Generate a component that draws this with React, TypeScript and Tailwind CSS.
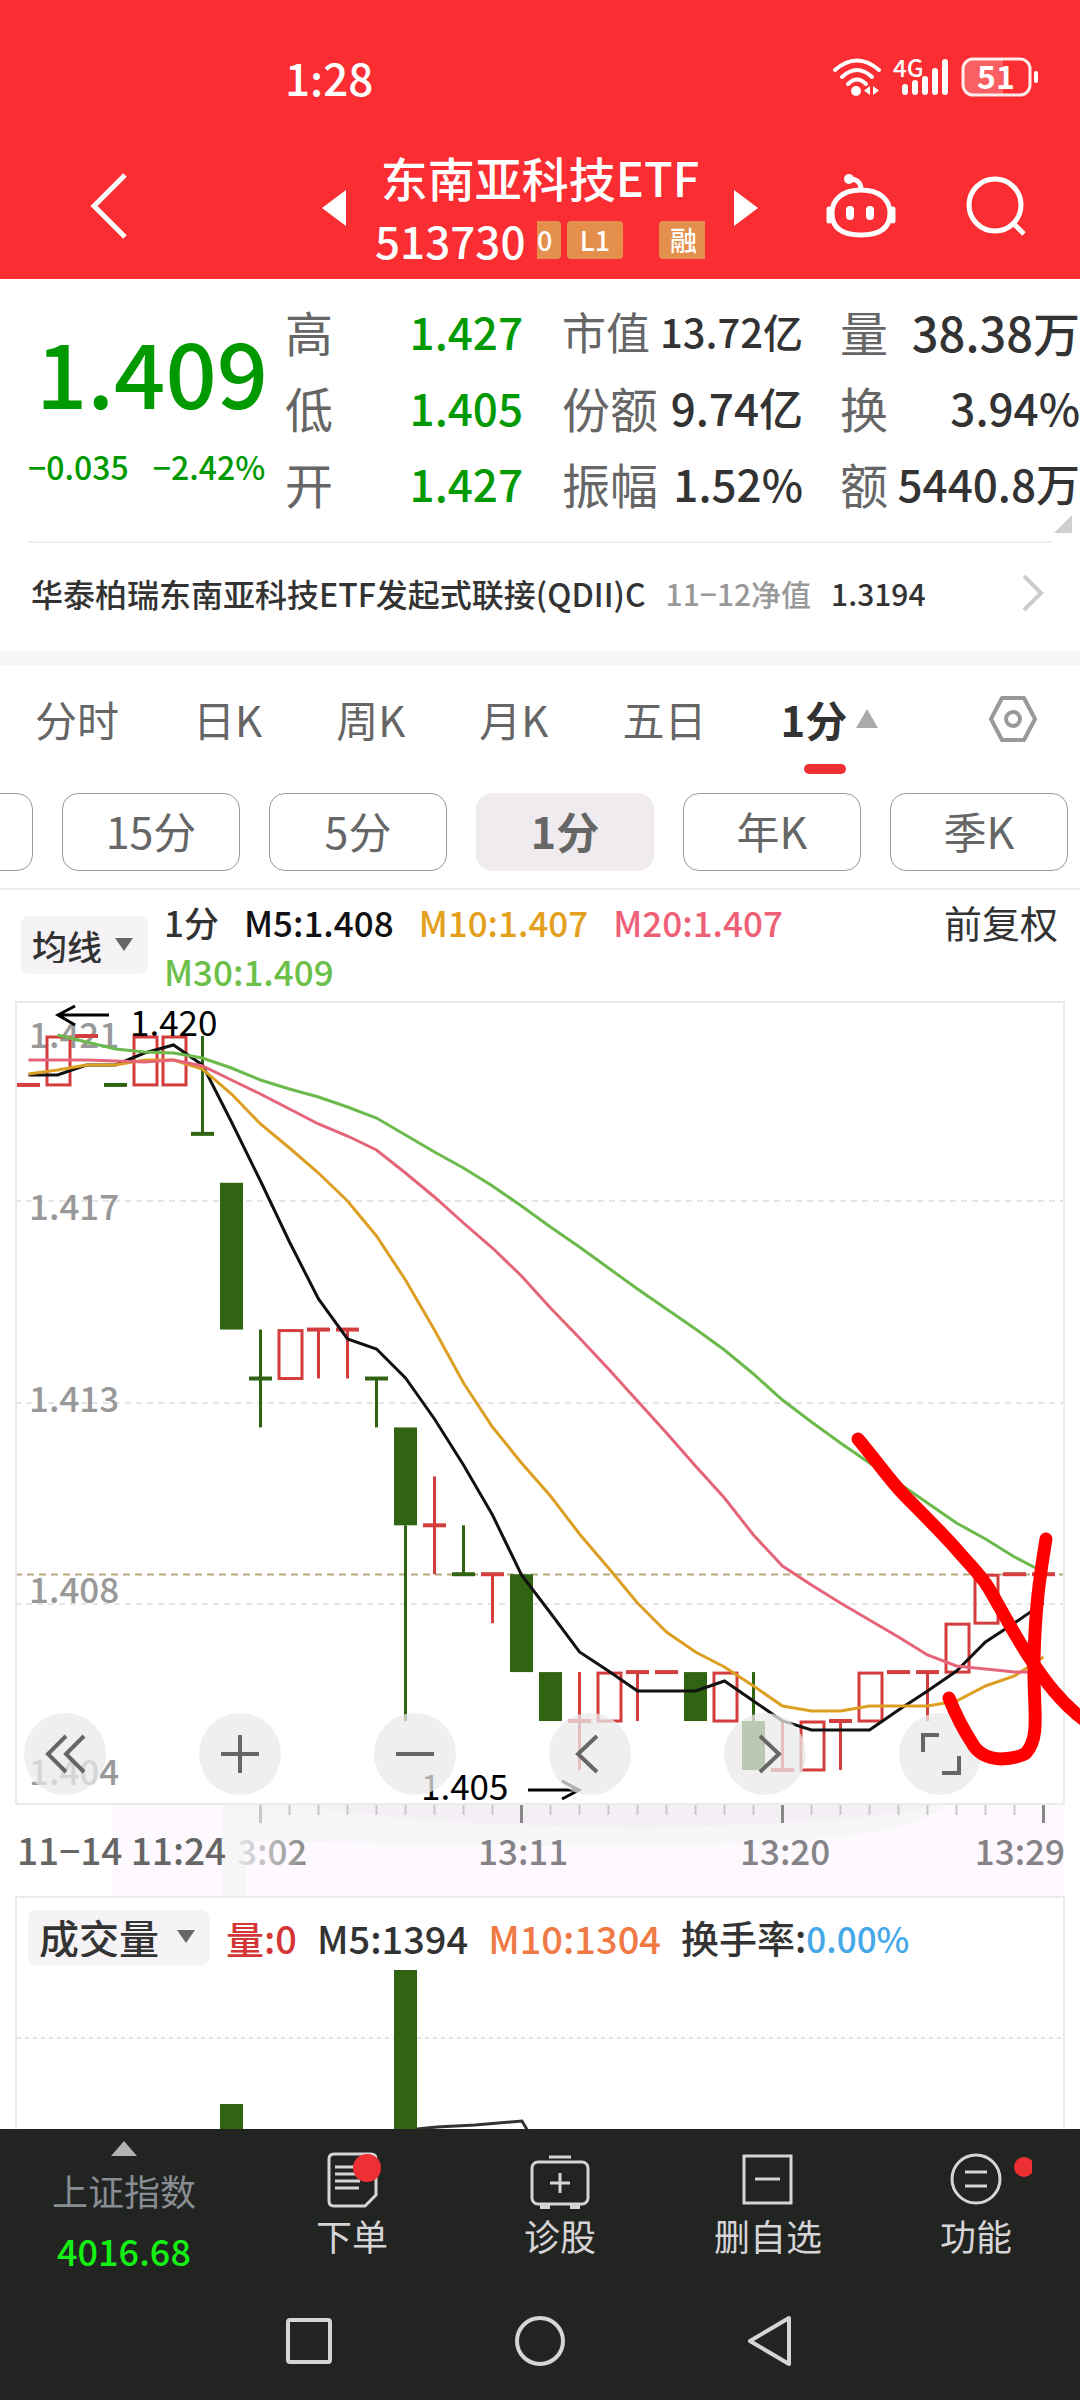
import type { ReactNode } from "react";

type Candle = {
  up: boolean;
  // levels count 0.001 steps down from 1.420
  top: number;
  bottom: number;
  high?: number;
  low?: number;
};

const STEP = 29;
const LEVEL = 48.93;

const xAt = (i: number) => 13.5 + STEP * i;
const yAt = (level: number) => 35 + LEVEL * level;

const candles: Candle[] = [
  { up: true, top: 1, bottom: 1 },
  { up: true, top: 0, bottom: 1 },
  { up: true, top: 0, bottom: 0 },
  { up: false, top: 1, bottom: 1 },
  { up: true, top: 0, bottom: 1 },
  { up: true, top: 0, bottom: 1 },
  { up: false, top: 2, bottom: 2, high: 0 },
  { up: false, top: 3, bottom: 6 },
  { up: false, top: 7, bottom: 7, high: 6, low: 8 },
  { up: true, top: 6, bottom: 7 },
  { up: true, top: 6, bottom: 6, low: 7 },
  { up: true, top: 6, bottom: 6, low: 7 },
  { up: false, top: 7, bottom: 7, low: 8 },
  { up: false, top: 8, bottom: 10, low: 14 },
  { up: true, top: 10, bottom: 10, high: 9, low: 11 },
  { up: false, top: 11, bottom: 11, high: 10 },
  { up: true, top: 11, bottom: 11, low: 12 },
  { up: false, top: 11, bottom: 13 },
  { up: false, top: 13, bottom: 14 },
  { up: true, top: 14, bottom: 14, high: 13, low: 15 },
  { up: true, top: 13, bottom: 14 },
  { up: true, top: 13, bottom: 13, low: 14 },
  { up: true, top: 13, bottom: 13 },
  { up: false, top: 13, bottom: 14 },
  { up: true, top: 13, bottom: 14 },
  { up: false, top: 14, bottom: 15, high: 13 },
  { up: true, top: 15, bottom: 15, high: 14 },
  { up: true, top: 14, bottom: 15 },
  { up: true, top: 14, bottom: 14, low: 15 },
  { up: true, top: 13, bottom: 14 },
  { up: true, top: 13, bottom: 13 },
  { up: true, top: 13, bottom: 13, low: 14 },
  { up: true, top: 12, bottom: 13 },
  { up: true, top: 11, bottom: 12 },
  { up: true, top: 11, bottom: 11 },
  { up: true, top: 11, bottom: 11 },
];

const averages = [
  {
    name: "M5",
    color: "#111111",
    start: 0,
    ys: [74, 74, 64, 64, 52, 44, 64, 121, 180, 241, 298, 338, 348, 377, 418, 464, 514, 574, 612, 651, 670, 690, 690, 690, 680, 700, 720, 729, 729, 729, 709, 690, 670, 641, 622, 602],
  },
  {
    name: "M10",
    color: "#dd9f23",
    start: 0,
    ys: [73, 69, 64, 64, 59, 59, 68, 93, 123, 147, 172, 200, 235, 279, 329, 382, 426, 462, 495, 533, 567, 602, 631, 651, 666, 685, 705, 710, 710, 705, 705, 705, 700, 685, 675, 656],
  },
  {
    name: "M30",
    color: "#6cb94c",
    start: 1,
    ys: [34, 41, 48, 51, 52, 57, 67, 79, 88, 96, 106, 117, 134, 151, 167, 185, 205, 226, 246, 267, 288, 308, 328, 349, 373, 399, 421, 442, 462, 482, 502, 522, 538, 556, 571],
  },
  {
    name: "M20",
    color: "#e5647a",
    start: 0,
    ys: [59, 59, 59, 60, 61, 59, 65, 79, 93, 108, 123, 135, 149, 172, 196, 222, 247, 275, 307, 337, 368, 400, 432, 465, 497, 534, 565, 584, 602, 619, 636, 654, 665, 668, 671, 671],
  },
];

const priceLabels = [
  { text: "1.421", y: 47 },
  { text: "1.417", y: 219 },
  { text: "1.413", y: 411 },
  { text: "1.408", y: 602 },
  { text: "1.404", y: 784 },
];

function StatusBar() {
  return (
    <div className="flex h-[145px] items-center justify-between pt-2 pr-[41px] pl-[285px]">
      <span className="text-[44px] leading-[64px] font-medium">1:28</span>
      <div className="flex items-center gap-3">
        <svg width="48" height="40" viewBox="0 0 48 40" fill="none" stroke="currentColor" strokeWidth="4" strokeLinecap="round">
          <path d="M2 13Q24 -6 46 13" />
          <path d="M9 20Q24 6 39 20" />
          <path d="M15 27Q24 18 33 27" />
          <circle cx="23" cy="34" r="5" fill="currentColor" stroke="none" />
          <path d="M37 29v9l-6 -4.500zM40 29v9l6 -4.500z" fill="currentColor" stroke="none" />
        </svg>
        <svg width="56" height="40" viewBox="0 0 56 40" fill="currentColor" className="overflow-visible">
          <text x="0" y="20" className="text-[24px] font-medium">4G</text>
          <rect x="9" y="27" width="6" height="11" rx="3" />
          <rect x="19" y="23" width="6" height="15" rx="3" />
          <rect x="29" y="19" width="6" height="19" rx="3" />
          <rect x="39" y="11" width="6" height="27" rx="3" />
          <rect x="49" y="2" width="6" height="36" rx="3" />
        </svg>
        <svg width="78" height="40" viewBox="0 0 78 40" className="overflow-visible">
          <path d="M12 2H42V38H12A10 10 0 0 1 2 28V12A10 10 0 0 1 12 2Z" fill="#ffffff" fillOpacity=".24" />
          <rect x="2" y="2" width="67" height="36" rx="10" fill="none" stroke="#fff" strokeOpacity=".9" strokeWidth="3" />
          <rect x="73" y="14" width="4" height="12" rx="2" fill="#fff" />
          <text x="35" y="32" textAnchor="middle" fill="#fff" className="text-[32px] font-bold">51</text>
        </svg>
      </div>
    </div>
  );
}

function Header() {
  return (
    <header className="bg-[#f92d32] text-white">
      <StatusBar />
      <div className="grid h-[134px] grid-cols-[1fr_auto_1fr] items-center pb-2">
        <button aria-label="返回" className="ml-[89px] w-10 pb-1">
          <svg width="40" height="68" viewBox="0 0 40 68" fill="none" stroke="currentColor" strokeWidth="5">
            <path d="M36 3L5 34L36 65" />
          </svg>
        </button>
        <div className="flex items-center">
          <button aria-label="上一只">
            <svg width="24" height="38" viewBox="0 0 24 38" fill="currentColor">
              <path d="M24 1V37L0 19Z" />
            </svg>
          </button>
          <div className="flex w-[388px] flex-col items-center">
            <h1 className="h-16 text-[47px] leading-[64px] font-medium whitespace-nowrap">
              东南亚科技ETF
            </h1>
            <div className="flex h-[62px] w-[330px] items-center overflow-hidden text-[44px] font-medium">
              <span className="leading-[62px]">513730</span>
              <div className="ml-auto flex w-[168px] overflow-hidden text-[27px] leading-[38px]">
                <span className="w-6 rounded-r bg-[#e58f4c]">0</span>
                <span className="ml-[6px] w-14 rounded bg-[#e58f4c] text-center">L1</span>
                <span className="ml-9 w-[46px] rounded-l bg-[#e58f4c] pl-[11px]">融</span>
              </div>
            </div>
          </div>
          <button aria-label="下一只">
            <svg width="24" height="38" viewBox="0 0 24 38" fill="currentColor">
              <path d="M0 1V37L24 19Z" />
            </svg>
          </button>
        </div>
        <div className="flex items-center justify-end gap-[69px] pr-[53px] pb-1">
          <button aria-label="智能助手">
            <svg width="70" height="66" viewBox="0 0 70 66" fill="none" stroke="currentColor" strokeWidth="5">
              <path d="M23 6C31 6 35 9 35 17" />
              <circle cx="23" cy="6" r="5" fill="currentColor" stroke="none" />
              <path d="M35 17C54 17 64 27 64 40C64 55 54 62 35 62C16 62 6 55 6 40C6 27 16 17 35 17Z" />
              <path d="M3 36v12M67 36v12" strokeWidth="5" strokeLinecap="round" />
              <rect x="20" y="33" width="8" height="14" rx="4" fill="currentColor" stroke="none" />
              <rect x="40" y="33" width="8" height="14" rx="4" fill="currentColor" stroke="none" />
            </svg>
          </button>
          <button aria-label="搜索">
            <svg width="62" height="62" viewBox="0 0 62 62" fill="none" stroke="currentColor" strokeWidth="5">
              <circle cx="30" cy="30" r="26" />
              <path d="M48 48L59 59" />
            </svg>
          </button>
        </div>
      </div>
    </header>
  );
}

function Row({ label, children }: { label: string; children: ReactNode }) {
  return (
    <div className="flex h-[76px] items-center justify-between whitespace-nowrap">
      <dt className="text-[48px] leading-none text-[#666]">{label}</dt>
      <dd className="text-[44px] leading-none font-medium">{children}</dd>
    </div>
  );
}

function Quote() {
  return (
    <section className="relative grid grid-cols-[285fr_277fr_278fr_240fr] pt-[14px] pb-5">
      <div className="pt-[29px] pl-9 text-[#009900]">
        <div className="text-[90px] leading-[96px] font-medium">1.409</div>
        <div className="mt-6 -ml-2 flex gap-6 text-[32px] leading-[48px] font-medium whitespace-nowrap">
          <span>−0.035</span>
          <span>−2.42%</span>
        </div>
      </div>
      <dl className="pr-[39px] text-[#009900]">
        <Row label="高">1.427</Row>
        <Row label="低">1.405</Row>
        <Row label="开">1.427</Row>
      </dl>
      <dl className="pr-[37px] text-[#333]">
        <div className="flex h-[76px] items-center justify-between whitespace-nowrap">
          <dt className="text-[44px] leading-none text-[#666]">市值</dt>
          <dd className="text-[40px] leading-none font-medium">13.72亿</dd>
        </div>
        <Row label="份额">9.74亿</Row>
        <Row label="振幅">1.52%</Row>
      </dl>
      <dl className="text-[#333]">
        <div className="flex h-[76px] items-center justify-between whitespace-nowrap">
          <dt className="text-[48px] leading-none text-[#666]">量</dt>
          <dd className="text-[47px] leading-none font-medium">38.38万</dd>
        </div>
        <Row label="换">3.94%</Row>
        <Row label="额">5440.8万</Row>
      </dl>
      <svg className="absolute right-2 bottom-2" width="18" height="18" viewBox="0 0 18 18" fill="#cfcfcf">
        <path d="M18 0V18H0Z" />
      </svg>
    </section>
  );
}

function FundLink() {
  return (
    <a href="#fund" className="mx-7 flex h-[110px] items-center border-t-2 border-[#efefef] pr-2 pb-2 pl-[3px] text-[32px] whitespace-nowrap">
      <span className="font-medium text-[#333]">华泰柏瑞东南亚科技ETF发起式联接(QDII)C</span>
      <span className="ml-5 text-[30px] font-medium text-[#999]">11−12净值</span>
      <span className="ml-5 text-[30px] font-medium text-[#333]">1.3194</span>
      <svg className="ml-auto" width="22" height="38" viewBox="0 0 22 38" fill="none" stroke="#ccc" strokeWidth="4">
        <path d="M2 2L19 19L2 36" />
      </svg>
    </a>
  );
}

function PeriodTabs() {
  return (
    <nav className="flex h-28 items-center gap-[74px] pr-[42px] pb-1 pl-[35px] text-[42px] leading-none whitespace-nowrap text-[#666]">
      {["分时", "日K", "周K", "月K", "五日"].map((tab) => (
        <button key={tab}>{tab}</button>
      ))}
      <button className="relative flex items-center gap-2 font-bold text-[#333]">
        1分
        <svg width="24" height="20" viewBox="0 0 24 20" fill="#aaa">
          <path d="M12 0L23 19H1Z" />
        </svg>
        <span className="absolute top-[66px] left-6 h-[10px] w-[42px] rounded-full bg-[#ee2f33]" />
      </button>
      <button aria-label="设置" className="ml-auto">
        <svg width="50" height="50" viewBox="0 0 50 50" fill="none" stroke="#999" strokeWidth="4" strokeLinejoin="round">
          <path d="M14 4H36L47 25L36 46H14L3 25Z" />
          <circle cx="25" cy="25" r="7" />
        </svg>
      </button>
    </nav>
  );
}

function MinutePills() {
  const pill = "h-[78px] w-[178px] shrink-0 rounded-2xl border border-[#999] pb-1 leading-none";
  return (
    <div className="flex justify-end gap-[29px] overflow-hidden border-b-2 border-[#efefef] pt-4 pr-3 pb-[17px] text-[43px] text-[#666]">
      <button aria-label="30分" className={pill} />
      <button className={pill}>15分</button>
      <button className={pill}>5分</button>
      <button className="h-[78px] w-[178px] shrink-0 rounded-2xl bg-[#efebef] pb-1 leading-none font-bold">
        1分
      </button>
      <button className={pill}>年K</button>
      <button className={pill}>季K</button>
    </div>
  );
}

function IndicatorSelect({ label, className }: { label: string; className: string }) {
  return (
    <div className={`relative shrink-0 ${className}`}>
      <select
        aria-label={label}
        className="h-full w-full appearance-none rounded-lg bg-[#f6f3f7] pl-[11px] leading-none font-medium text-[#333]"
      >
        <option>{label}</option>
      </select>
      <svg className="pointer-events-none absolute top-1/2 right-[14px] -translate-y-1/2" width="20" height="14" viewBox="0 0 20 14" fill="#666">
        <path d="M1 0H19L10 13Z" />
      </svg>
    </div>
  );
}

function AverageLegend() {
  return (
    <div className="flex h-[111px] items-start pr-[22px] pl-[21px] text-[35px] leading-[49px] font-medium">
      <IndicatorSelect label="均线" className="mt-[26px] h-[58px] w-[127px]" />
      <div className="ml-4 flex flex-1 flex-wrap gap-x-[25px] pt-[7px]">
        <span className="text-[#333]">1分</span>
        <span className="text-[#111]">M5:1.408</span>
        <span className="text-[#e3a01c]">M10:1.407</span>
        <span className="text-[#ee6076]">M20:1.407</span>
        <span className="text-[#6cc04a]">M30:1.409</span>
      </div>
      <button className="ml-4 pt-[7px] text-[38px] font-normal text-[#333]">前复权</button>
    </div>
  );
}

function CandleMark({ candle, index }: { candle: Candle; index: number }) {
  const x = xAt(index);
  const top = yAt(candle.top);
  const bottom = yAt(candle.bottom);
  const color = candle.up ? "#d43d3d" : "#306412";
  const flat = candle.top === candle.bottom;
  return (
    <g stroke={color} strokeWidth="3" fill="none">
      {candle.high !== undefined && <path d={`M${x} ${yAt(candle.high)}V${top}`} />}
      {candle.low !== undefined && <path d={`M${x} ${bottom}V${yAt(candle.low)}`} />}
      {flat && <path d={`M${x - 11.5} ${top}h23`} strokeWidth="4" />}
      {!flat && candle.up && <rect x={x - 10.5} y={top + 1} width="23" height={bottom - top - 1} />}
      {!flat && !candle.up && (
        <rect x={x - 11.5} y={top} width="23" height={bottom - top} fill={color} stroke="none" />
      )}
    </g>
  );
}

const toolIcons = [
  { name: "折叠", d: "M20 1L2 19L20 37M38 1L20 19L38 37" },
  { name: "放大", d: "M19 0V38M0 19H38" },
  { name: "缩小", d: "M0 19H38" },
  { name: "前移", d: "M26 1L7 19L26 37" },
  { name: "后移", d: "M14 1L33 19L14 37" },
  { name: "全屏", d: "M2 17V0H18M38 21V38H21" },
];

function PriceChart() {
  return (
    <div className="relative mx-[15px]">
      <svg className="block w-full overflow-visible" viewBox="0 0 1050 804">
        <g strokeDasharray="6 5" strokeWidth="1.500" stroke="#dcdcdc">
          <path d="M0 200H1050M0 402H1050M0 603H1050" />
        </g>
        <path d="M0 573.500H1050" stroke="#b5aa80" strokeWidth="2" strokeDasharray="7 5" />
        <g fill="#999" className="text-[35px] font-medium">
          {priceLabels.map((label) => (
            <text key={label.text} x="14" y={label.y}>
              {label.text}
            </text>
          ))}
        </g>
        {candles.map((candle, i) => (
          <CandleMark key={i} candle={candle} index={i} />
        ))}
        {averages.map((line) => (
          <polyline
            key={line.name}
            points={line.ys.map((y, i) => `${xAt(i + line.start)},${y}`).join(" ")}
            fill="none"
            stroke={line.color}
            strokeWidth="3"
          />
        ))}
        <g fill="none" stroke="#000" strokeWidth="3">
          <path d="M94 14H43M60 5L43 14L60 24" />
          <path d="M513 789H564M547 780L564 789L547 798" />
        </g>
        <g className="text-[35px]">
          <text x="115" y="35">1.420</text>
          <text x="406" y="799">1.405</text>
        </g>
        <rect x="1" y="1" width="1048" height="802" fill="none" stroke="#ebebeb" strokeWidth="2" />
      </svg>
      <div className="absolute inset-x-0 bottom-[10px] flex justify-between pr-[84px] pl-[9px]">
        {toolIcons.map((icon) => (
          <button
            key={icon.name}
            aria-label={icon.name}
            className="flex h-[82px] w-[82px] items-center justify-center rounded-full bg-[#e9e9e9]/75"
          >
            <svg width="38" height="38" viewBox="0 0 38 38" fill="none" stroke="#666" strokeWidth="4" overflow="visible">
              <path d={icon.d} />
            </svg>
          </button>
        ))}
      </div>
      <svg
        className="pointer-events-none absolute inset-0 w-full overflow-visible"
        viewBox="0 0 1050 804"
        fill="none"
        stroke="#ff0000"
        strokeWidth="13"
        strokeLinecap="round"
        strokeLinejoin="round"
      >
        <path d="M843 438C860 458 876 481 890 495S930 535 942 549S965 573 973 586S1000 635 1014 656S1046 703 1072 721" />
        <path d="M1031 538C1024 580 1020 610 1019 659S1026 735 1011 752Q1004 757 986 758Q965 757 957 742Q944 722 934 697" />
      </svg>
    </div>
  );
}

function TimeAxis() {
  return (
    <svg className="mx-[15px] block w-[calc(100%-30px)]" viewBox="0 0 1050 91">
      <rect x="97" width="953" height="91" fill="#fdf9fe" />
      <path d="M207 0H930Q900 30 760 36Q600 42 500 40L231 36V91H207Z" fill="#f6f6f6" />
      <path d="M290 0H920Q860 18 640 22Q400 22 290 0Z" fill="#f3eff4" />
      {candles.map((_, i) => {
        if (i < 8) return null;
        const major = (i - 8) % 9 === 0;
        return (
          <path
            key={i}
            d={`M${xAt(i)} 0V${major ? 18 : 10}`}
            stroke={major && i > 8 ? "#888" : "#c8c8c8"}
            strokeWidth={major ? 3 : 2}
          />
        );
      })}
      <defs>
        <linearGradient id="fade">
          <stop offset="0" stopColor="#e6e4e7" />
          <stop offset="1" stopColor="#888" />
        </linearGradient>
      </defs>
      <g className="text-[35px] font-medium" fill="#858387">
        <text x="2" y="60" fill="#666" className="text-[37px]">11−14 11:24</text>
        <text x="222" y="60" fill="url(#fade)">3:02</text>
        <text x="463" y="60">13:11</text>
        <text x="725" y="60">13:20</text>
        <text x="1050" y="60" textAnchor="end">13:29</text>
      </g>
    </svg>
  );
}

function VolumePanel() {
  return (
    <div className="relative mx-[15px] h-[233px] overflow-hidden border-x-2 border-t-2 border-[#ebebeb]">
      <svg className="absolute inset-x-0 top-0 w-full" viewBox="0 0 1046 233" fill="none">
        <path d="M0 140H1046" stroke="#e4e4e4" strokeWidth="2" strokeDasharray="4 4" />
        <path d="M203 206h23v27h-23zM377 72h23v161h-23z" fill="#306412" />
        <path d="M400 231L420 229L458 227L505 223L512 235" stroke="#333" strokeWidth="3" />
      </svg>
      <div className="relative flex items-center gap-5 pt-[11px] pl-[11px] text-[38px] leading-[55px] font-medium whitespace-nowrap">
        <IndicatorSelect label="成交量" className="-mr-1 h-[55px] w-[182px] text-[40px]" />
        <span className="text-[#d43636]">量:0</span>
        <span className="text-[#333]">M5:1394</span>
        <span className="text-[#ef7a45]">M10:1304</span>
        <span className="text-[#333]">
          换手率:<span className="text-[35px] text-[#47a8e8]">0.00%</span>
        </span>
      </div>
    </div>
  );
}

function BarItem({ label, children }: { label: string; children: ReactNode }) {
  return (
    <button className="flex flex-1 flex-col items-center pt-[18px]">
      <svg width="112" height="64" viewBox="0 0 112 64" fill="none" stroke="#d6d4d6" strokeWidth="3">
        {children}
      </svg>
      <span className="leading-[48px]">{label}</span>
    </button>
  );
}

function BottomBar() {
  return (
    <footer className="bg-[#222422]">
      <div className="flex h-[152px] text-[36px] leading-[48px] text-[#d6d4d6]">
        <button className="flex w-[248px] flex-col items-center pt-3">
          <svg width="26" height="16" viewBox="0 0 26 16" fill="#b4b2b4">
            <path d="M13 0L26 15H0Z" />
          </svg>
          <span className="mt-[9px] text-[#878d92]">上证指数</span>
          <span className="mt-3 font-medium text-[#15f015]">4016.68</span>
        </button>
        <BarItem label="下单">
          <path d="M38 7H75Q80 7 80 12V48L69 59H38Q33 59 33 54V12Q33 7 38 7Z" />
          <path d="M39 20H64M39 27H64M39 34H64M39 41H63" />
          <circle cx="71" cy="21" r="14" fill="#ee2f33" stroke="none" />
        </BarItem>
        <BarItem label="诊股">
          <rect x="28" y="15" width="56" height="42" rx="6" />
          <path d="M45 10H67M56 26V46M46 36H66" />
          <path d="M36 60H46M66 60H76" strokeWidth="4" />
        </BarItem>
        <BarItem label="删自选">
          <rect x="32" y="9" width="47" height="47" />
          <path d="M43 32H68" />
        </BarItem>
        <BarItem label="功能">
          <circle cx="56" cy="32" r="24" />
          <path d="M45 25H67M45 39H67" />
          <circle cx="104" cy="20" r="10" fill="#ee2f33" stroke="none" />
        </BarItem>
      </div>
      <div className="flex h-[119px] items-center justify-center gap-[181px]">
        <button aria-label="最近任务">
          <svg width="50" height="54" viewBox="0 0 50 54" fill="none" stroke="#d6d4d6" strokeWidth="4">
            <rect x="4" y="6" width="42" height="42" rx="2" />
          </svg>
        </button>
        <button aria-label="主屏幕">
          <svg width="50" height="54" viewBox="0 0 50 54" fill="none" stroke="#d6d4d6" strokeWidth="4">
            <circle cx="25" cy="27" r="23" />
          </svg>
        </button>
        <button aria-label="返回桌面">
          <svg width="50" height="54" viewBox="0 0 50 54" fill="none" stroke="#d6d4d6" strokeWidth="4" strokeLinejoin="round">
            <path d="M43 4V50L4 27Z" />
          </svg>
        </button>
      </div>
    </footer>
  );
}

export default function App() {
  return (
    <div className="min-h-screen overflow-x-hidden bg-white font-['Noto_Sans_CJK_SC',sans-serif]">
      <Header />
      <main>
        <Quote />
        <FundLink />
        <div className="h-[14px] bg-[#f6f6f6]" />
        <PeriodTabs />
        <MinutePills />
        <AverageLegend />
        <PriceChart />
        <TimeAxis />
        <VolumePanel />
      </main>
      <BottomBar />
    </div>
  );
}
